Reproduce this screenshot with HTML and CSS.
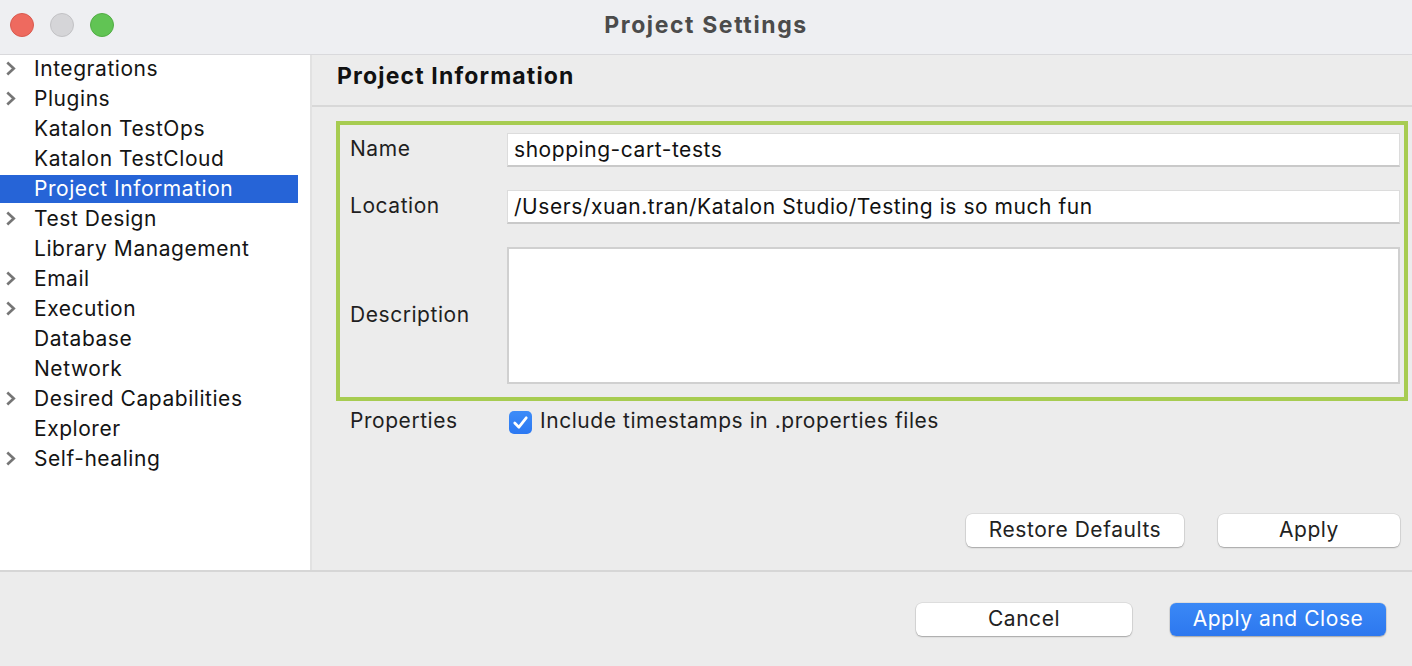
FILE: index.html
```html
<!DOCTYPE html>
<html>
<head>
<meta charset="utf-8">
<link rel="stylesheet" href="styles.css">
</head>
<body>
<div class="window">
  <div class="titlebar">
    <div class="lights">
      <span class="light red"></span>
      <span class="light gray"></span>
      <span class="light green"></span>
    </div>
    <div class="title">Project Settings</div>
  </div>
  <div class="main">
    <div class="sidebar">
      <div class="item"><svg class="chev" viewBox="0 0 10 14"><path d="M2 1.5 L8 7 L2 12.5"/></svg><span>Integrations</span></div>
      <div class="item"><svg class="chev" viewBox="0 0 10 14"><path d="M2 1.5 L8 7 L2 12.5"/></svg><span>Plugins</span></div>
      <div class="item"><span>Katalon TestOps</span></div>
      <div class="item"><span>Katalon TestCloud</span></div>
      <div class="item selected"><span>Project Information</span></div>
      <div class="item"><svg class="chev" viewBox="0 0 10 14"><path d="M2 1.5 L8 7 L2 12.5"/></svg><span>Test Design</span></div>
      <div class="item"><span>Library Management</span></div>
      <div class="item"><svg class="chev" viewBox="0 0 10 14"><path d="M2 1.5 L8 7 L2 12.5"/></svg><span>Email</span></div>
      <div class="item"><svg class="chev" viewBox="0 0 10 14"><path d="M2 1.5 L8 7 L2 12.5"/></svg><span>Execution</span></div>
      <div class="item"><span>Database</span></div>
      <div class="item"><span>Network</span></div>
      <div class="item"><svg class="chev" viewBox="0 0 10 14"><path d="M2 1.5 L8 7 L2 12.5"/></svg><span>Desired Capabilities</span></div>
      <div class="item"><span>Explorer</span></div>
      <div class="item"><svg class="chev" viewBox="0 0 10 14"><path d="M2 1.5 L8 7 L2 12.5"/></svg><span>Self-healing</span></div>
    </div>
    <div class="panel">
      <div class="panel-head">Project Information</div>
      <div class="panel-body">
        <div class="highlight">
          <div class="row">
            <label class="lbl">Name</label>
            <div class="field">shopping-cart-tests</div>
          </div>
          <div class="row">
            <label class="lbl">Location</label>
            <div class="field">/Users/xuan.tran/Katalon Studio/Testing is so much fun</div>
          </div>
          <div class="row desc-row">
            <label class="lbl">Description</label>
            <div class="area"></div>
          </div>
        </div>
        <div class="props">
          <span class="lbl">Properties</span>
          <span class="check"><svg viewBox="0 0 22 22"><path d="M5.5 11.5 L9.5 15.5 L16.5 6.5"/></svg></span>
          <span class="check-text">Include timestamps in .properties files</span>
        </div>
        <div class="spacer"></div>
        <div class="actions">
          <button class="btn w218">Restore Defaults</button>
          <button class="btn w182">Apply</button>
        </div>
      </div>
    </div>
  </div>
  <div class="footer">
    <button class="btn w216">Cancel</button>
    <button class="btn w216 primary">Apply and Close</button>
  </div>
</div>
</body>
</html>
```
FILE: styles.css
```css
* { box-sizing: border-box; }
html, body { margin: 0; padding: 0; }
body {
  width: 1412px;
  height: 666px;
  overflow: hidden;
  font-family: Inter, "Helvetica Neue", "Liberation Sans", sans-serif;
  color: #1d1d1d;
  background: #ececec;
  letter-spacing: 0.55px;
}
.window { display: flex; flex-direction: column; width: 1412px; height: 666px; }
.titlebar {
  height: 55px;
  flex: none;
  background: #eeeff2;
  border-bottom: 1px solid #d9d9dc;
  display: flex;
  align-items: center;
  justify-content: center;
  position: relative;
}
.lights { position: absolute; left: 10px; top: 13px; display: flex; gap: 16px; }
.light { width: 24px; height: 24px; border-radius: 50%; display: block; }
.light.red { background: #ee6a5f; border: 1px solid #d95a4f; }
.light.gray { background: #d5d5d8; border: 1px solid #c2c2c5; }
.light.green { background: #61c454; border: 1px solid #52ad45; }
.title { font-size: 23px; font-weight: 700; color: #4b4b4b; letter-spacing: 1.6px; margin-top: -4px; }

.main { display: flex; height: 515px; flex: none; }
.sidebar {
  width: 312px;
  background: #fff;
  border-right: 2px solid #e2e2e2;
}
.item {
  height: 30px;
  display: flex;
  align-items: center;
  position: relative;
  padding-left: 34px;
  padding-bottom: 4px;
  font-size: 21px;
  color: #141414;
  width: 298px;
}
.item.selected { background: #2664d7; color: #fff; height: 28px; margin-bottom: 2px; padding-bottom: 2px; }
.chev {
  position: absolute;
  left: 5px;
  top: 6px;
  width: 11px;
  height: 15px;
  fill: none;
  stroke: #767676;
  stroke-width: 2.5;
}

.panel { flex: 1; display: flex; flex-direction: column; background: #ececec; }
.panel-head {
  height: 52px;
  flex: none;
  border-bottom: 2px solid #d8d8d8;
  padding-left: 25px;
  display: flex;
  align-items: center;
  font-size: 23px;
  font-weight: 700;
  color: #111;
  letter-spacing: 1.15px;
  padding-bottom: 8px;
}
.panel-body { flex: 1; display: flex; flex-direction: column; padding: 14px 4px 23px 24px; }
.highlight {
  border: 4px solid #a7cc51;
  padding: 8px 4px 13px 10px;
  display: flex;
  flex-direction: column;
  gap: 23px;
}
.row { display: flex; align-items: center; }
.lbl { width: 157px; font-size: 21px; color: #1f1f1f; flex: none; padding-bottom: 3px; }
.field {
  flex: 1;
  height: 34px;
  background: #fff;
  border: 1px solid #dcdcdc;
  border-bottom: 2px solid #c9c9c9;
  padding-left: 6px;
  display: flex;
  align-items: center;
  font-size: 21px;
  color: #111;
  white-space: nowrap;
}
.area {
  flex: 1;
  height: 137px;
  background: #fff;
  border: 2px solid #d0d0d0;
}
.props { display: flex; align-items: center; padding-left: 14px; margin-top: 7px; }
.check {
  width: 23px;
  height: 23px;
  border-radius: 5px;
  background: linear-gradient(#3d8cf8, #2b78f2);
  margin-left: 2px;
  margin-right: 8px;
  display: flex;
}
.check svg { width: 23px; height: 23px; fill: none; stroke: #fff; stroke-width: 2.6; stroke-linecap: round; stroke-linejoin: round; }
.check-text { font-size: 21px; color: #1f1f1f; padding-bottom: 3px; }
.spacer { flex: 1; }
.actions { display: flex; justify-content: flex-end; gap: 34px; padding-right: 8px; }
.btn {
  height: 33px;
  border: none;
  border-radius: 6px;
  background: #fff;
  box-shadow: 0 0 0 0.5px rgba(0,0,0,0.12), 0 1px 1.5px rgba(0,0,0,0.25);
  font-family: inherit;
  font-size: 21px;
  letter-spacing: 0.55px;
  color: #222;
  padding: 0 0 3px 0;
}
.w218 { width: 218px; }
.w182 { width: 182px; }
.w216 { width: 216px; }
.btn.primary { background: linear-gradient(#3a88f6, #2d78ef); color: #fff; }
.footer {
  flex: 1;
  border-top: 2px solid #d6d6d6;
  display: flex;
  justify-content: flex-end;
  align-items: flex-start;
  gap: 38px;
  padding-top: 31px;
  padding-right: 26px;
}
```
